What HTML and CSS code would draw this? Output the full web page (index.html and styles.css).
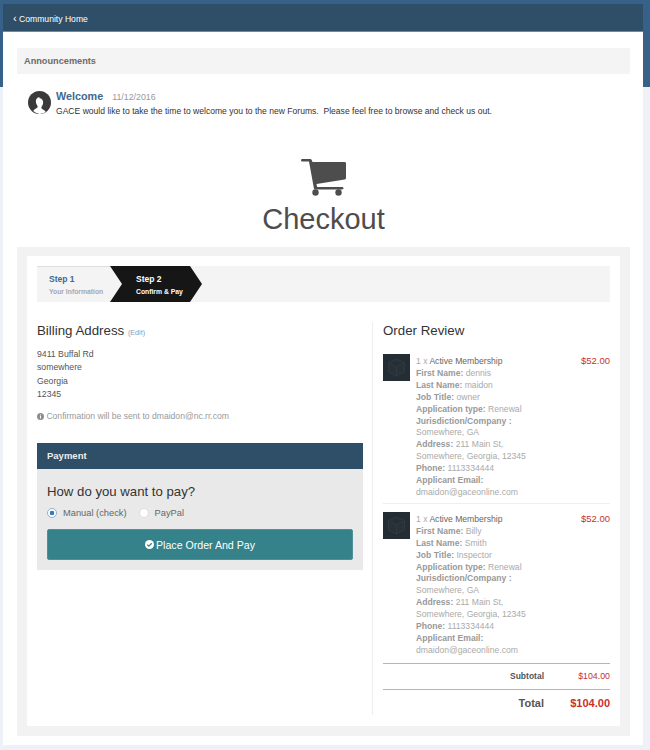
FILE: index.html
```html
<!DOCTYPE html>
<html lang="en">
<head>
<meta charset="utf-8">
<title>Checkout</title>
<link rel="stylesheet" href="styles.css">
</head>
<body>
<div class="band"></div>
<div class="page">
  <nav class="topbar"><span class="chev">‹</span> Community Home</nav>
  <main class="sheet">
    <h2 class="ann-head">Announcements</h2>
    <section class="ann">
      <svg class="avatar" viewBox="0 0 24 24"><circle cx="12" cy="12" r="12" fill="#3a3a3a"/><path d="M12 6.500c-2.300 0-3.800 1.900-3.800 4.300 0 2 .8 3.700 1.800 4.800.3 1.400-.7 2.200-2.200 3-1 .5-1.800 1.200-2.300 2.300A12 12 0 0 0 12 24a12 12 0 0 0 6.500-2.100c-.5-1.100-1.300-1.800-2.300-2.300-1.500-.8-2.500-1.600-2.200-3 1-1.100 1.800-2.800 1.800-4.800 0-2.400-1.500-4.300-3.800-4.300z" fill="#fff"/></svg>
      <div>
        <div class="ann-title"><a>Welcome</a><span class="ann-date">11/12/2016</span></div>
        <p class="ann-text">GACE would like to take the time to welcome you to the new Forums.&nbsp; Please feel free to browse and check us out.</p>
      </div>
    </section>
    <header class="hero">
      <svg class="cart" viewBox="0 0 46 38"><path d="M1.500 1h7.500c1 0 1.600.5 1.900 1.500L11.500 4H43.500c1 0 1.500.6 1.500 1.500V20c0 .8-.5 1.400-1.300 1.500L15.500 26l.6 3H41c1 0 1.500.6 1.500 1.300s-.5 1.200-1.500 1.200H14.500c-.9 0-1.400-.5-1.600-1.300L8 3.500H1.500C.6 3.500 0 3 0 2.200S.6 1 1.500 1z" fill="#4d4d4d"/><circle cx="14.500" cy="34.500" r="3.200" fill="#4d4d4d"/><circle cx="37.500" cy="34.500" r="3.200" fill="#4d4d4d"/></svg>
      <h1>Checkout</h1>
    </header>
    <section class="panel">
      <div class="inner">
        <div class="steps">
          <div class="step step-one"><strong>Step 1</strong><small>Your Information</small></div>
          <div class="step step-two"><strong>Step 2</strong><small>Confirm &amp; Pay</small></div>
        </div>
        <div class="cols">
          <div class="left">
            <h3 class="h-title">Billing Address <a class="edit">(Edit)</a></h3>
            <address class="addr">9411 Buffal Rd<br>somewhere<br>Georgia<br>12345</address>
            <p class="confirm"><svg class="info" viewBox="0 0 16 16"><circle cx="8" cy="8" r="8" fill="#8e8e8e"/><rect x="6.800" y="7" width="2.400" height="5.500" fill="#fff"/><rect x="6.800" y="3.500" width="2.400" height="2.200" fill="#fff"/></svg> Confirmation will be sent to dmaidon@nc.rr.com</p>
            <div class="pay">
              <div class="pay-head">Payment</div>
              <div class="pay-body">
                <h3 class="pay-q">How do you want to pay?</h3>
                <div class="radios">
                  <span class="radio on"></span><span class="r-label">Manual (check)</span>
                  <span class="radio"></span><span class="r-label">PayPal</span>
                </div>
                <button class="btn"><svg class="check" viewBox="0 0 16 16"><circle cx="8" cy="8" r="8" fill="#fff"/><path d="M4 8.200l2.800 2.800L12 5.800" fill="none" stroke="#35828a" stroke-width="2.300"/></svg>Place Order And Pay</button>
              </div>
            </div>
          </div>
          <aside class="right">
            <h3 class="h-title">Order Review</h3>
            <article class="item">
              <svg class="thumb" viewBox="0 0 27 27"><rect width="27" height="27" fill="#232d33"/><path d="M13.500 5l8 3.500v9.500l-8 4-8-4V8.500zM5.500 8.500l8 4 8-4M13.500 12.500V22" fill="#273137" stroke="#2f3a40" stroke-width="1"/></svg>
              <div class="details">
                <div class="name"><span class="qty">1 x</span> Active Membership</div>
                <b>First Name:</b> dennis<br><b>Last Name:</b> maidon<br><b>Job Title:</b> owner<br><b>Application type:</b> Renewal<br><b>Jurisdiction/Company :</b><br>Somewhere, GA<br><b>Address:</b> 211 Main St,<br>Somewhere, Georgia, 12345<br><b>Phone:</b> 1113334444<br><b>Applicant Email:</b><br>dmaidon@gaceonline.com
              </div>
              <div class="price">$52.00</div>
            </article>
            <article class="item item-last">
              <svg class="thumb" viewBox="0 0 27 27"><rect width="27" height="27" fill="#232d33"/><path d="M13.500 5l8 3.500v9.500l-8 4-8-4V8.500zM5.500 8.500l8 4 8-4M13.500 12.500V22" fill="#273137" stroke="#2f3a40" stroke-width="1"/></svg>
              <div class="details">
                <div class="name"><span class="qty">1 x</span> Active Membership</div>
                <b>First Name:</b> Billy<br><b>Last Name:</b> Smith<br><b>Job Title:</b> Inspector<br><b>Application type:</b> Renewal<br><b>Jurisdiction/Company :</b><br>Somewhere, GA<br><b>Address:</b> 211 Main St,<br>Somewhere, Georgia, 12345<br><b>Phone:</b> 1113334444<br><b>Applicant Email:</b><br>dmaidon@gaceonline.com
              </div>
              <div class="price">$52.00</div>
            </article>
            <div class="sum sub"><span class="sum-l">Subtotal</span><span class="sum-v">$104.00</span></div>
            <div class="sum tot"><span class="sum-l">Total</span><span class="sum-v">$104.00</span></div>
          </aside>
        </div>
      </div>
    </section>
  </main>
</div>
</body>
</html>
```

FILE: styles.css
```css
* { box-sizing: border-box; }
html, body { margin: 0; height: 750px; overflow: hidden; }
body { background: #eef1f7; font-family: "Liberation Sans", Arial, sans-serif; position: relative; }
h1, h2, h3, p { margin: 0; font-weight: normal; }
.band { position: absolute; top: 0; left: 0; right: 0; height: 87px; background: #376189; }
.page { position: relative; margin: 0 7px 0 3px; padding-top: 4px; }
.topbar { height: 28px; background: #2f4f68; color: #fff; font-size: 8.600px; line-height: 28px; padding-left: 10px; border-bottom: 1px solid #6d8aa3; }
.chev { font-size: 11px; }
.sheet { background: #fff; height: 713px; padding: 16px 13px 0 14px; }
.ann-head { height: 26px; background: #f4f4f4; color: #6b6b6b; font-size: 9.200px; font-weight: bold; line-height: 26px; padding-left: 7px; }
.ann { display: flex; padding: 16px 0 0 11px; gap: 5px; }
.avatar { width: 23px; height: 23px; flex: none; margin-top: 1px; }
.ann-title { font-size: 8.800px; color: #999; line-height: 12px; }
.ann-title a { color: #41688f; font-size: 10.800px; font-weight: bold; margin-right: 9px; }
.ann-text { color: #333; font-size: 8.570px; line-height: 12px; margin-top: 2px; }
.hero { text-align: center; padding-top: 41px; height: 130px; }
.cart { width: 46px; height: 38px; display: block; margin: 0 auto; }
.hero h1 { color: #4d4d4d; font-size: 29px; line-height: 34px; margin-top: 6px; }
.panel { background: #f2f2f2; height: 489px; padding: 9px 10px 10px; }
.inner { background: #fff; height: 470px; padding: 10px 10px 0 10px; }
.steps { display: flex; height: 36px; background: #f4f4f4; }
.step { width: 73px; padding: 7px 0 0 12px; }
.step strong { display: block; font-size: 8.500px; line-height: 12px; }
.step small { display: block; font-size: 6.800px; line-height: 11px; font-weight: bold; margin-top: 1px; }
.step-one { border-top: 1px solid #ddd; padding-top: 6px; color: #5a7ea8; }
.step-one strong { color: #41688f; }
.step-one small { color: #a5a9b5; }
.step-two { width: 92px; background: #161616; color: #fff; padding-left: 26px; clip-path: polygon(0 0, 80px 0, 92px 50%, 80px 100%, 0 100%, 12px 50%); }
.cols { display: flex; }
.left { width: 326px; flex: none; padding-top: 20px; }
.right { margin: 20px 0 0 9px; width: 238px; border-left: 1px solid #eee; padding: 0 0 0 10px; height: 393px; }
.h-title { color: #333; font-size: 13.300px; line-height: 18px; }
.edit { color: #8a9bbd; font-size: 7.200px; }
.addr { font-style: normal; color: #555; font-size: 8.700px; line-height: 13.300px; margin-top: 6px; }
.confirm { color: #999; font-size: 8.600px; line-height: 12px; margin-top: 9px; }
.info { width: 7px; height: 7px; vertical-align: -0.500px; }
.pay { margin-top: 21px; background: #e9e9e9; }
.pay-head { height: 26px; background: #2f4f68; color: #eee; font-size: 9.500px; font-weight: bold; line-height: 26px; padding-left: 10px; }
.pay-body { padding: 15px 10px 0 10px; height: 101px; }
.pay-q { color: #333; font-size: 13.200px; line-height: 16px; }
.radios { display: flex; align-items: center; height: 15px; margin-top: 5px; }
.radio { width: 10px; height: 10px; border-radius: 50%; background: #fff; border: 1px solid #ddd; display: block; flex: none; }
.radio.on { border: 1px solid #8fb2d6; background: radial-gradient(circle, #3f7ab5 0 2px, #fff 2.600px); }
.r-label { color: #666; font-size: 9.300px; margin: 0 12px 0 6px; }
.btn { display: flex; align-items: center; justify-content: center; gap: 2px; width: 100%; height: 31px; margin-top: 9px; background: #35828a; border: 1px solid #50909a; border-radius: 2px; color: #fff; font: 10.600px "Liberation Sans", Arial, sans-serif; }
.check { width: 9px; height: 9px; }
.item { display: flex; margin-top: 14px; padding-bottom: 4px; border-bottom: 1px solid #eee; font-size: 8.600px; line-height: 11.900px; color: #aaa; }
.item + .item { margin-top: 8px; }
.item-last { border-bottom: 0; padding-bottom: 6px; }
.thumb { width: 27px; height: 27px; flex: none; }
.details { flex: 1; margin-left: 6px; padding-top: 2px; }
.details b { color: #999; }
.name { color: #666; }
.qty { color: #aaa; }
.price { color: #c9302c; font-size: 9.500px; line-height: 13px; }
.sum { display: flex; justify-content: flex-end; align-items: center; border-top: 1px solid #b5b5b5; font-weight: bold; color: #555; }
.sub { height: 26px; font-size: 8.500px; }
.sub .sum-v { font-weight: normal; font-size: 8.800px; }
.tot { height: 28px; font-size: 11px; }
.sum-v { color: #c9302c; width: 66px; text-align: right; }
```
